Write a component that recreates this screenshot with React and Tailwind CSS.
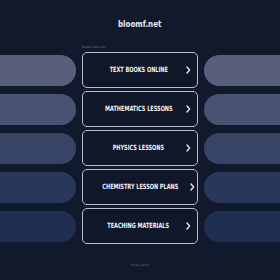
const rows = [
  { label: 'TEXT BOOKS ONLINE', pill: 'bg-[#575f7d]' },
  { label: 'MATHEMATICS LESSONS', pill: 'bg-[#485271]' },
  { label: 'PHYSICS LESSONS', pill: 'bg-[#374465]' },
  { label: 'CHEMISTRY LESSON PLANS', pill: 'bg-[#29375a]' },
  { label: 'TEACHING MATERIALS', pill: 'bg-[#202e4f]' },
];

function Chevron() {
  return (
    <svg width="5" height="8" viewBox="0 0 5 8" className="shrink-0">
      <path d="M1 1l2.6 3L1 7" fill="none" stroke="#e5e7eb" strokeWidth="1.4" strokeLinecap="round" strokeLinejoin="round" />
    </svg>
  );
}

export default function App() {
  return (
    <div className="h-[280px] w-[280px] overflow-hidden bg-[#111a2c] font-['DejaVu_Sans_Condensed','DejaVu_Sans',sans-serif]">
      <div className="flex justify-center pt-[18px]">
        <span className="inline-block scale-x-[0.88] text-[9px] font-semibold leading-[12px] text-[#e8eaf0]">bloomf.net</span>
      </div>
      <div className="mt-[15px] pl-[82px] text-[3px] leading-[4px] text-[#6b7285]">Related Searches</div>
      <div className="mt-[3px] flex flex-col gap-[3px]">
        {rows.map((r) => (
          <div key={r.label} className="flex h-[36px] items-center gap-[6px]">
            <div className={`h-[31px] flex-1 rounded-r-[16px] ${r.pill}`} />
            <div className="flex h-[36px] w-[116px] items-center rounded-[5px] border-[1.5px] border-[#b9bdc7] bg-[#0f1729] pl-[8px] pr-[6px]">
              <div className="flex flex-1 justify-center">
                <span className="inline-block scale-x-[0.77] whitespace-nowrap text-[7.2px] font-bold leading-[8px] text-[#f1f3f6]">{r.label}</span>
              </div>
              <Chevron />
            </div>
            <div className={`h-[31px] flex-1 rounded-l-[16px] ${r.pill}`} />
          </div>
        ))}
      </div>
      <div className="mt-[19px] text-center text-[3px] leading-[4px] text-[#6b7285]">Privacy policy</div>
    </div>
  );
}
